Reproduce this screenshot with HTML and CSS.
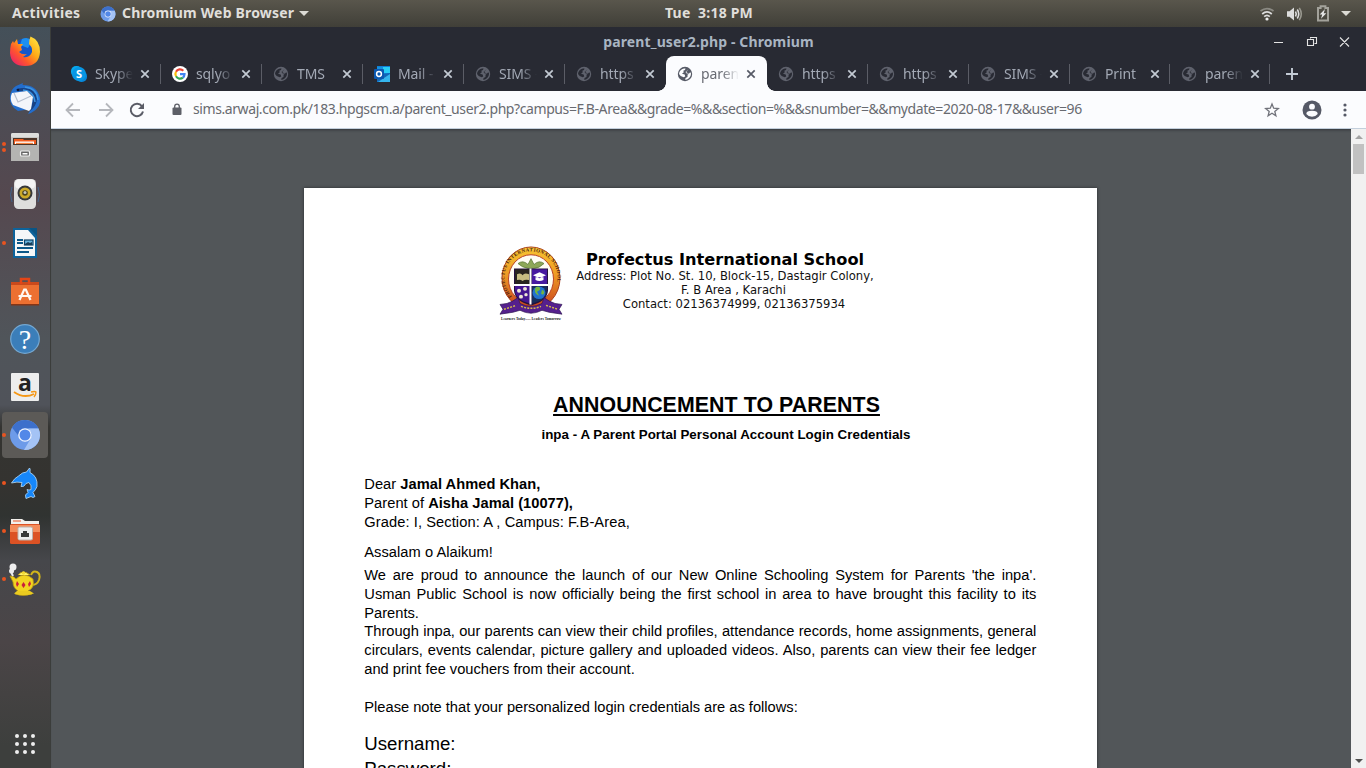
FILE: index.html
```html
<!DOCTYPE html>
<html lang="en">
<head>
<meta charset="utf-8">
<title>parent_user2.php - Chromium</title>
<link rel="stylesheet" href="styles.css">
</head>
<body>
<svg width="0" height="0" class="defs">
  <defs>
    <symbol id="globe" viewBox="0 0 16 16"><circle cx="8" cy="8" r="7.200" fill="currentColor"/><path class="land" d="M2 8Q2.300 3.600 7 2.400l1.500.100L8 4 6.300 4.700 6.800 6.300 5 7.700l2.700.700.500 2-1.500.900Q3 10.300 2 8zM11.500 3.300L9.200 6l1.800 1.300 3-.800Q14.300 11 10.500 13.200L8.300 14l.2-1.900 2-1.200.1-2.300 2.200-1.100L9.700 7.500 8.500 6z"/></symbol>
    <symbol id="close" viewBox="0 0 10 10"><path d="M1.300 1.300l7.400 7.400M8.700 1.300L1.300 8.700" stroke="currentColor" stroke-width="1.700" fill="none"/></symbol>
    <symbol id="chromium" viewBox="0 0 32 32"><circle cx="16" cy="16" r="15" fill="#6d9be9"/><path d="M3 8.500A15 15 0 0 1 29.500 9.500H16a6.500 6.500 0 0 0-6 8z" fill="#3d70cb"/><path d="M29.500 9.500A15 15 0 0 1 15 31l7-12c1.500-3 .500-7-3-9.500z" fill="#a4c3f5"/><circle cx="16" cy="16" r="6.800" fill="#f0f5ff"/><circle cx="16" cy="16" r="5.500" fill="#5288e8"/></symbol>
  </defs>
</svg>

<header class="topbar">
  <span class="activities">Activities</span>
  <svg class="app-icon" width="16" height="16"><use href="#chromium"/></svg>
  <span class="app-name">Chromium Web Browser</span>
  <i class="caret app-caret"></i>
  <span class="clock">Tue&nbsp; 3:18 PM</span>
  <div class="tray">
    <svg width="16" height="16" viewBox="0 0 16 16" fill="none" stroke="#ddd" stroke-width="1.700"><path d="M1.500 5Q8 .200 14.500 5" stroke="#8b8a83"/><path d="M3.200 8Q8 3.600 12.800 8M5.200 10.700Q8 8 10.800 10.700"/><circle cx="8" cy="13" r="1.600" fill="#eee" stroke="none"/></svg>
    <svg class="volume" width="17" height="16" viewBox="0 0 17 16" fill="none" stroke="#ddd" stroke-width="1.600"><path d="M1 5.300h2.500L8 1.500v13L3.500 10.700H1z" fill="#ddd" stroke="none"/><path d="M9.500 5.500q1.500 2.500 0 5M11.300 3.500q2.900 4.500 0 9"/><path d="M13.300 1.900q4 6.100 0 12.200" stroke="#99988f"/></svg>
    <svg width="14" height="17" viewBox="0 0 14 17"><path d="M2 3h2.600V1.200h4.800V3H12v12.500H2z" fill="none" stroke="#a3a29b" stroke-width="2"/><path d="M9 4L3.700 9.500h2.500L5 13.700l5.300-5.500H7.700z" fill="#e6e6e6"/></svg>
    <i class="caret"></i>
  </div>
</header>

<div class="desktop">
<nav class="dock">
  <div class="launcher"><svg width="32" height="32" viewBox="0 0 32 32"><defs><linearGradient id="ff" x1="1" y1="0" x2="0" y2="1"><stop offset="0" stop-color="#fff04a"/><stop offset=".4" stop-color="#ffaa16"/><stop offset=".65" stop-color="#ff572c"/><stop offset="1" stop-color="#e5107c"/></linearGradient></defs><circle cx="16" cy="16" r="12.500" fill="#1457c9"/><path d="M13 4q6-3 10 2l-4 7-8-3z" fill="#1d8ff0"/><path d="M2 9l2-3 1 2 3-4 1 5 5 0-2 3 1 3-3 2q3 3 8 2l-4 3q5 1 8-3 3-5-2-10 0-4 1.500-7.500Q31 5 31 17q-1 14-15 14T1 18q0-5 1-9z" fill="url(#ff)"/></svg></div>
  <div class="launcher"><svg width="32" height="32" viewBox="0 0 32 32"><path d="M7 3l7-3q-1 2 0 2 14 0 17 13 2 9-9 15l-3 1 3-5-13 2Q0 23 1 13 2 6 7 3z" fill="#236dcc"/><path d="M14 5q13 0 14 11-1 8-7 12l3-10-8-9-9-2q1-2 7-2z" fill="#174184"/><path d="M16 4q12 1 13 13M14 7q11 1 12 12" fill="none" stroke="#3c94e1" stroke-width="1.400"/><path d="M3 10l15-2 6 6-2 12-2 2L4 22q-4-6-1-12z" fill="#f3f5fa"/><path d="M5 10l4 9 13-6" fill="none" stroke="#b6bfce" stroke-width="1.200"/><circle cx="9" cy="7" r="1.300" fill="#111b3a"/></svg></div>
  <div class="launcher two"><svg width="30" height="30" viewBox="0 0 30 30"><rect x="1" y="1" width="28" height="28" rx="2" fill="#c8c8c6"/><rect x="1" y="1" width="28" height="4" rx="1.500" fill="#dededc"/><rect x="3" y="6" width="24" height="7" fill="#4c3427"/><path d="M4 12V7h9l1 1h12v4z" fill="#ef5b1f"/><path d="M5 12V9.500h19V12z" fill="#fff"/><path d="M6 12v-1.200h17V12z" fill="#f4823e"/><path d="M1 13h28v16H1z" fill="#b4b4b2"/><rect x="10.500" y="19" width="9" height="5" rx="1" fill="#666" stroke="#eee" stroke-width="1.200"/><rect x="12.500" y="21" width="5" height="1.500" fill="#fff"/></svg></div>
  <div class="launcher speaker"><svg width="32" height="32" viewBox="0 0 32 32"><path d="M3 9q-3 8 0 15M29 9q3 8 0 15" stroke="#40648d" fill="none"/><rect x="5" y="1" width="22" height="30" rx="4.500" fill="#dededd"/><rect x="6" y="1.500" width="20" height="9" rx="4" fill="#f4f4f4"/><circle cx="16" cy="15" r="7.500" fill="#36383a"/><circle cx="16" cy="15" r="5.500" fill="#cba928"/><circle cx="16" cy="15" r="2.800" fill="#4b4320"/><circle cx="16" cy="14.500" r="1.500" fill="#c5c7b6"/></svg></div>
  <div class="launcher one"><svg width="26" height="32" viewBox="0 0 26 32"><path d="M1 1h17l7 8v22H1z" fill="#0d639b"/><path d="M3 3h13l7 8v18H3z" fill="#f5f7f8"/><path d="M17 1h8v8z" fill="#0a5585"/><path d="M5 13h6M5 16h6M5 21h16M5 25h12" stroke="#0b5889" stroke-width="1.800"/><rect x="12.500" y="13" width="8.500" height="5" fill="#67b2db" stroke="#0b4167" stroke-width="1.200"/><path d="M13 17l3-2 2 1 2-1v3h-7z" fill="#183c57"/></svg></div>
  <div class="launcher"><svg width="30" height="32" viewBox="0 0 30 32"><path d="M1 7h28v23H1z" fill="#ec7031"/><path d="M1 7h28v3H1z" fill="#c94a1c"/><path d="M1 29h28v1.500H1z" fill="#843516"/><path d="M11 9V4h8v5" fill="none" stroke="#e34517" stroke-width="2.500"/><path d="M9.500 25l4.700-10.500h1.600L20.500 25M8.500 21h13" stroke="#fff7f1" stroke-width="2.200" fill="none"/></svg></div>
  <div class="launcher"><svg width="32" height="32" viewBox="0 0 32 32"><circle cx="16" cy="16" r="14.300" fill="#3b7eb9" stroke="#74a8d2" stroke-width="1.200"/><text x="16" y="26" class="help">?</text></svg></div>
  <div class="launcher"><svg width="28" height="28" viewBox="0 0 28 28"><rect width="28" height="28" rx="1" fill="#ededed"/><text x="14" y="17.500" class="amazon">a</text><path d="M3 19q10 7 20 2" fill="none" stroke="#f59715" stroke-width="1.900"/><path d="M20 19q4-1 5 0 0 3-2 5" fill="none" stroke="#f59715" stroke-width="1.400"/></svg></div>
  <div class="launcher one current"><svg width="32" height="32"><use href="#chromium"/></svg></div>
  <div class="launcher one"><svg width="32" height="32" viewBox="0 0 32 32"><path d="M2.500 16q3-5 7-7 4-4 8-4l3-4q1 0 .500 4.500 8 4 7 14-1 3-4 6l2 4q-2 2-4 0l-5 2q-2-4 2-6l-1-3q2 1 4 0 1-4-2-7l-3 1q-2 4-5 3l1-4q-5-1-10.500.500z" fill="#1687fa" stroke="#b9dcf6" stroke-width=".8"/></svg></div>
  <div class="launcher one"><svg width="32" height="28" viewBox="0 0 32 28"><path d="M2 8V2h11l3 2h14v5z" fill="#f2f0ec"/><path d="M4 4h8" stroke="#e55529"/><rect x="1" y="7" width="30" height="20" rx="1.500" fill="#dc5224"/><path d="M1 8h30v7H1z" fill="#f48b59"/><rect x="9" y="10" width="14.500" height="13" rx="1.500" fill="#eeeeed" stroke="#bcb2ac"/><path d="M12 20v-4h2v-2h4v2h2v4z" fill="#393a38"/></svg></div>
  <div class="launcher one"><svg width="34" height="34" viewBox="0 0 34 34"><path d="M23 13q2-5 6-3 4 2 2 8-2 5-7 5" fill="none" stroke="#d2b51a" stroke-width="2"/><path d="M2 14q4 0 6 3 8-8 17 0 2 9-5 12l4 3q-9 3-17 0l3-3q-5-3-5-9z" fill="#f2d321" stroke="#b69612" stroke-width=".8"/><path d="M9 29h13l4 2.500q-10 3-20 0z" fill="#eacb20"/><path d="M10 13q5-6 12 0" fill="#fff26b" stroke="#bd9a17"/><circle cx="15.500" cy="11" r="1.700" fill="#f3da35"/><path d="M9 19l2 3-2 3-1-3zM15.500 20l2 3-2 3-2-3zM22 19l1 3-2 3-1-3z" fill="#ca1d3b"/><circle cx="5" cy="5" r="3.500" fill="#eee"/><circle cx="3.500" cy="9" r="2.500" fill="#eee"/><path d="M3 10q1 2 2 4" stroke="#eee" stroke-width="2"/></svg></div>
  <div class="apps"><i></i><i></i><i></i><i></i><i></i><i></i><i></i><i></i><i></i></div>
</nav>

<main class="window">
  <div class="titlebar"><span class="window-title">parent_user2.php - Chromium</span>
    <svg class="window-buttons" width="80" height="14" viewBox="0 0 80 14" fill="none" stroke="#e4e4e4" stroke-width="1.100"><path d="M1 7.500h9M37.500 3.500v-1h6v6h-2M34.500 4.500h6v6h-6zM67 2.500l9 9M76 2.500l-9 9"/></svg>
  </div>
  <div class="tabs">
    <div class="tab"><svg class="fav" viewBox="0 0 16 16"><rect width="11" height="11" rx="5" fill="#06a9ef"/><rect x="5" y="5" width="11" height="11" rx="5" fill="#0786d9"/><circle cx="8" cy="8" r="7" fill="#0796e4"/><text x="8" y="12" class="skype-s">S</text></svg><span class="label">Skype</span><svg class="x"><use href="#close"/></svg></div>
    <div class="tab"><svg class="fav" viewBox="0 0 16 16"><circle cx="8" cy="8" r="8" fill="#fff"/><g fill="none" stroke-width="2.200"><path d="M11.300 4.700A4.600 4.600 0 0 0 4 5.800" stroke="#ea4335"/><path d="M4 5.800a4.600 4.600 0 0 0 0 4.500" stroke="#fbbc05"/><path d="M4 10.300a4.600 4.600 0 0 0 6.900 1.300" stroke="#34a853"/><path d="M10.900 11.600q1.500-1.200 1.600-3.400H8" stroke="#4285f4"/></g></svg><span class="label">sqlyo</span><svg class="x"><use href="#close"/></svg></div>
    <div class="tab"><svg class="fav"><use href="#globe"/></svg><span class="label short">TMS</span><svg class="x"><use href="#close"/></svg></div>
    <div class="tab"><svg class="fav" viewBox="0 0 16 16"><path d="M3 0h13v16H3z" fill="#0f7fd6"/><path d="M3 1h6v5H3z" fill="#1490df"/><path d="M9 1h7v6H9z" fill="#28cdf5"/><path d="M3 9l13-2v8.500H3z" fill="#1266b7"/><path d="M16 8v8H4z" fill="#35b5ed"/><rect y="3" width="10" height="10" rx="1" fill="#0b58b0"/><circle cx="5" cy="8" r="2.400" stroke="#fff" stroke-width="1.500" fill="none"/></svg><span class="label">Mail -</span><svg class="x"><use href="#close"/></svg></div>
    <div class="tab"><svg class="fav"><use href="#globe"/></svg><span class="label">SIMS -</span><svg class="x"><use href="#close"/></svg></div>
    <div class="tab before"><svg class="fav"><use href="#globe"/></svg><span class="label">https</span><svg class="x"><use href="#close"/></svg></div>
    <div class="tab active"><svg class="fav"><use href="#globe"/></svg><span class="label">paren</span><svg class="x"><use href="#close"/></svg></div>
    <div class="tab"><svg class="fav"><use href="#globe"/></svg><span class="label">https</span><svg class="x"><use href="#close"/></svg></div>
    <div class="tab"><svg class="fav"><use href="#globe"/></svg><span class="label">https</span><svg class="x"><use href="#close"/></svg></div>
    <div class="tab"><svg class="fav"><use href="#globe"/></svg><span class="label">SIMS -</span><svg class="x"><use href="#close"/></svg></div>
    <div class="tab narrow"><svg class="fav"><use href="#globe"/></svg><span class="label short">Print</span><svg class="x"><use href="#close"/></svg></div>
    <div class="tab narrow"><svg class="fav"><use href="#globe"/></svg><span class="label">paren</span><svg class="x"><use href="#close"/></svg></div>
    <svg class="plus" width="12" height="12" viewBox="0 0 12 12"><path d="M6 0v12M0 6h12" stroke="#c3cbd5" stroke-width="1.900"/></svg>
  </div>
  <div class="toolbar">
    <svg class="back" width="16" height="16" viewBox="0 0 16 16" fill="none" stroke="#b5b7bc" stroke-width="1.800"><path d="M15 8H2M8 1.500L1.500 8 8 14.500"/></svg>
    <svg class="forward" width="16" height="16" viewBox="0 0 16 16" fill="none" stroke="#b5b7bc" stroke-width="1.800"><path d="M1 8h13M8 1.500L14.500 8 8 14.500"/></svg>
    <svg class="reload" width="16" height="16" viewBox="0 0 16 16"><path d="M13 4.300A6.200 6.200 0 1 0 14 9.500" fill="none" stroke="#5a5c66" stroke-width="2"/><path d="M15 1v6H9z" fill="#5a5c66"/></svg>
    <svg class="lock" width="10" height="13" viewBox="0 0 10 13"><rect x=".5" y="4.500" width="9" height="7.500" rx="1" fill="#5d5f67"/><path d="M2.700 5V3.400a2.300 2.300 0 0 1 4.600 0V5" fill="none" stroke="#5d5f67" stroke-width="1.300"/></svg>
    <span class="url">sims.arwaj.com.pk/183.hpgscm.a/parent_user2.php?campus=F.B-Area&amp;&amp;grade=%&amp;&amp;section=%&amp;&amp;snumber=&amp;&amp;mydate=2020-08-17&amp;&amp;user=96</span>
    <svg class="star" width="16" height="16" viewBox="0 0 16 16"><path d="M8 2l1.700 4.200 4.600.300-3.500 2.900 1.100 4.400L8 11.300l-3.900 2.500 1.100-4.400-3.500-2.900 4.600-.300z" fill="none" stroke="#70727a" stroke-width="1.300"/></svg>
    <svg class="profile" width="20" height="20" viewBox="0 0 20 20"><circle cx="10" cy="10" r="9.500" fill="#555966"/><circle cx="10" cy="6.700" r="2.900" fill="#fbfcfe"/><path d="M4.300 14q0-3.200 5.700-3.200t5.700 3.200Q13.500 16.800 10 16.800T4.300 14z" fill="#fbfcfe"/></svg>
    <svg class="menu" width="4" height="14" viewBox="0 0 4 14" fill="#555966"><circle cx="2" cy="2" r="1.600"/><circle cx="2" cy="7" r="1.600"/><circle cx="2" cy="12" r="1.600"/></svg>
  </div>
  <div class="viewport">
    <article class="sheet">
      <div class="letterhead">
        <svg class="crest" width="64" height="75" viewBox="0 0 64 77" preserveAspectRatio="none">
          <defs><linearGradient id="ring" x1="0" y1="0" x2="0" y2="1"><stop offset="0" stop-color="#f7c531"/><stop offset=".45" stop-color="#ee9a25"/><stop offset="1" stop-color="#c73d1c"/></linearGradient><path id="arc" d="M13 52C-4 32 10 5.500 32 5.500S68 32 51 52"/></defs>
          <ellipse cx="32" cy="33" rx="29" ry="32" fill="url(#ring)" stroke="#a8401c"/><ellipse cx="32" cy="34" rx="22.500" ry="25" fill="#fffdf4" stroke="#b73e24"/>
          <text class="ring-text"><textPath href="#arc">PROFECTUS INTERNATIONAL SCHOOL</textPath></text>
          <path d="M19 18q5-4 10 1l3-6 3 6q5-5 10-1-5 5-10 5h-6q-6-1-10-5z" fill="#8da758" stroke="#567231" stroke-width=".7"/>
          <path d="M15 23h34v23q-1 11-17 15Q16 57 15 46z" fill="#25113f"/><path d="M16 24h15v15H16z" fill="#29251e"/><path d="M33 24h15v15H33z" fill="#4719a0"/><path d="M16 41h15v18q-14-3-15-13z" fill="#451690"/><path d="M33 41h15v6q-1 9-15 12z" fill="#172d5b"/>
          <path d="M31.500 23v37M15 40h34" stroke="#fff" stroke-width="2"/><path d="M18 29q4-2 5.500 1 2-3 6.500-1v6q-4-1-6.500 1-2-2-5.500-1z" fill="#c7bd80"/><path d="M34 30l6.500-3 6.500 3-6.500 3zM36.500 32v3q4 2 8 0v-3" fill="#fff"/><g fill="#efe8d4"><circle cx="20" cy="46" r="2"/><circle cx="26" cy="44" r="2"/><circle cx="22" cy="52" r="2"/><circle cx="27" cy="50" r="1.700"/></g><circle cx="40" cy="48" r="6.500" fill="#2271cf"/><path d="M37 42q5-1 4 3l-3 2 2 4q-5-2-4-7zM43 45q4 2 1 5l-2-1z" fill="#73b540"/>
          <path d="M1 60l7-1q6-2 11-6l2 6q11 6 22 0l2-6q5 4 11 6l7 1-3 5 3 5-13-2-7-2q-11 6-22 0l-7 2-13 2 3-5z" fill="#55208d" stroke="#2d1351" stroke-width=".7"/><path d="M5 65l12-4M22 62q10 4 20 0M47 61l12 4" stroke="#d4b84e" stroke-width="1.500" stroke-dasharray="2 1.200" fill="none"/>
          <text x="32" y="75.500" class="motto">Learners Today...... Leaders Tomorrow</text>
        </svg>
        <div class="school"><h1>Profectus International School</h1><p>Address: Plot No. St. 10, Block-15, Dastagir Colony,</p><p class="area">F. B Area , Karachi</p><p class="contact">Contact: 02136374999, 02136375934</p></div>
      </div>
      <h2>ANNOUNCEMENT TO PARENTS</h2>
      <h3>inpa - A Parent Portal Personal Account Login Credentials</h3>
      <div class="recipient"><p>Dear <b>Jamal Ahmed Khan,</b></p><p>Parent of <b>Aisha Jamal (10077),</b></p><p class="grade">Grade: I, Section: A , Campus: F.B-Area,</p></div>
      <p class="greeting">Assalam o Alaikum!</p>
      <div class="letter">
        <p class="full">We are proud to announce the launch of our New Online Schooling System for Parents 'the inpa'.</p>
        <p class="full">Usman Public School is now officially being the first school in area to have brought this facility to its</p>
        <p>Parents.</p>
        <p class="full">Through inpa, our parents can view their child profiles, attendance records, home assignments, general</p>
        <p class="full">circulars, events calendar, picture gallery and uploaded videos. Also, parents can view their fee ledger</p>
        <p>and print fee vouchers from their account.</p>
        <p class="note">Please note that your personalized login credentials are as follows:</p>
      </div>
      <div class="credentials"><p>Username:</p><p>Password:</p></div>
    </article>
    <div class="scrollbar"><i class="up"></i><i class="thumb"></i><i class="down"></i></div>
  </div>
</main>
</div>
</body>
</html>
```
FILE: styles.css
```css
* { box-sizing: border-box; }
body, p, h1, h2, h3 { margin: 0; }
body { width: 1366px; height: 768px; overflow: hidden; font-family: "Noto Sans", "Open Sans", sans-serif; }
svg { display: block; flex: none; overflow: visible; }
.defs { position: absolute; }

.topbar { height: 27px; display: flex; align-items: center; position: relative; padding-left: 12px; background: linear-gradient(#59564c, #403f38); color: #e0dfdb; font-size: 14px; line-height: 19px; font-weight: 700; white-space: nowrap; }
.topbar span { padding-bottom: 2px; }
.activities { width: 88px; letter-spacing: .35px; }
.app-icon { margin-right: 6px; }
.app-name { width: 173px; letter-spacing: .18px; }
.clock { width: 100px; margin-left: 356px; letter-spacing: .2px; }
.caret { width: 0; height: 0; border: 5px solid transparent; border-top-color: #dcdbd5; border-bottom: 0; }
.app-caret { margin-left: 4px; }
.tray { margin-left: auto; padding-right: 15px; display: flex; align-items: center; gap: 11px; }
.volume { margin-right: 2px; }

.desktop { display: flex; height: 741px; }
.dock { width: 51px; flex: none; border-right: 1px solid #3b3d3b; background: linear-gradient(#445059, #55484f 23%, #50555a 42%, #50535a 51%, #343431 54%, #343330 62%, #303331 66%, #46474b 72%, #4b4547 83%, #3d3f3d 97%); }
.launcher { height: 48px; padding-right: 1px; display: flex; justify-content: center; align-items: center; position: relative; }
.speaker { padding-bottom: 2px; }
.launcher.current { margin: 1px 2px; height: 46px; border-radius: 4px; background: #5c5a57; }
.one::before, .two::before, .two::after { content: ""; position: absolute; left: 2px; top: 22px; width: 4px; height: 4px; border-radius: 50%; background: #e95420; }
.current::before { left: 0; top: 21px; }
.two::before { top: 19px; }
.two::after { top: 25px; }
.help { font: 28px "Liberation Serif", serif; fill: #fff; text-anchor: middle; }
.amazon { font: bold 23px "Open Sans", sans-serif; fill: #222; text-anchor: middle; }
.apps { margin: 131px 0 0 15px; display: grid; grid-template-columns: repeat(3, 4px); gap: 4px; }
.apps i { width: 4px; height: 4px; border-radius: 50%; background: #eee; }

.window { flex: 1; min-width: 0; background: #282a33; }
.titlebar { height: 30px; position: relative; display: flex; justify-content: center; align-items: center; color: #a9b5c2; font-size: 14px; line-height: 19px; font-weight: 700; white-space: nowrap; }
.window-title { padding-bottom: 2px; letter-spacing: .12px; }
.window-buttons { position: absolute; right: 13px; top: 8px; }
.tabs { height: 34px; padding-left: 9px; display: flex; align-items: center; }
.tab { --land: #282a33; width: 101px; height: 34px; flex: none; display: flex; align-items: center; padding-left: 11px; position: relative; color: #a3a9b5; }
.tab.narrow { width: 100px; }
.tab::after { content: ""; position: absolute; right: 0; top: 7px; width: 1px; height: 20px; background: #5b5d66; }
.tab.active::after, .tab.before::after { display: none; }
.fav { width: 16px; height: 16px; color: #5f626d; }
.land { fill: var(--land); }
.label { width: 38px; margin-left: 8px; white-space: pre; font-size: 14px; line-height: 20px; letter-spacing: -.1px; mask-image: linear-gradient(90deg, #000 55%, transparent 100%); }
.short { mask-image: linear-gradient(90deg, #000 75%, transparent 110%); }
.x { width: 10px; height: 10px; margin-left: 7px; color: #c3cad3; }
.tab.active { --land: #fbfcfe; background: #fbfcfe; border-radius: 8px 8px 0 0; color: #686b73; margin-top: -1px; height: 35px; }
.active::before { content: ""; position: absolute; left: -8px; right: -8px; bottom: 0; height: 8px; background: radial-gradient(circle at 0 0, transparent 7.500px, #fbfcfe 8px) 0 0/8px 8px no-repeat, radial-gradient(circle at 100% 0, transparent 7.500px, #fbfcfe 8px) 100% 0/8px 8px no-repeat; }
.active .fav, .active .x { color: #565a66; }
.skype-s { font: bold 11px "Noto Sans", sans-serif; fill: #fff; text-anchor: middle; }
.plus { margin-left: 16px; }
.toolbar { height: 38px; background: #fbfcfe; border-bottom: 1px solid #c3cfdc; padding: 0 19px 0 14px; display: flex; align-items: center; }
.forward { margin-left: 17px; }
.reload { margin-left: 15px; }
.lock { margin-left: 27px; }
.url { margin-left: 11px; padding-bottom: 2px; width: 1055px; font-size: 14px; letter-spacing: -.413px; white-space: nowrap; color: #686a70; }
.star { margin-left: 16px; }
.profile { margin: 0 21px 0 22px; }

.viewport { height: 639px; overflow: hidden; display: flex; background: #525659; box-shadow: inset 0 3px 3px -2px #30353a; }
.sheet { width: 793px; height: 1122px; flex: none; margin: 59px auto 0 253px; padding: 58px 60px; background: #fff; color: #000; box-shadow: 0 0 3px #292b2d; font: 14.667px/19px "Liberation Sans", Arial, sans-serif; }
.letterhead { display: flex; align-items: flex-start; padding-left: 135px; height: 146px; }
.ring-text { font: bold 5px "Liberation Serif", serif; letter-spacing: .45px; fill: #4a1c10; }
.motto { font: bold 3.600px "Liberation Serif", serif; text-anchor: middle; fill: #222; }
.school { width: 300px; margin-left: 12px; padding-top: 4px; text-align: center; white-space: nowrap; font: 11.6px/14px "DejaVu Sans", sans-serif; color: #111; }
.school h1 { font-size: 16.180px; line-height: 19px; color: #000; }
.school .area { padding-left: 17px; }
.school .contact { padding-left: 18px; }
h2 { font-size: 21.333px; line-height: 26px; letter-spacing: .08px; width: 705px; text-align: center; text-decoration: underline; text-decoration-thickness: 2px; text-underline-offset: 2px; }
h3 { margin-top: 8px; width: 724px; text-align: center; font-size: 13.333px; line-height: 18px; letter-spacing: .03px; }
.recipient { margin-top: 31px; padding-left: .3px; letter-spacing: .03px; }
.grade { letter-spacing: .08px; }
.greeting { margin-top: 11px; padding-left: .3px; letter-spacing: .04px; }
.letter { margin-top: 4px; width: 672.3px; padding-left: .3px; line-height: 18.750px; white-space: nowrap; }
.full { text-align: justify; text-align-last: justify; }
.note { margin-top: 19px; }
.credentials { margin-top: 15px; padding-left: .3px; font-size: 18.667px; line-height: 25px; }
.scrollbar { width: 15px; flex: none; background: #f1f1f1; display: flex; flex-direction: column; align-items: center; }
.up { margin-top: 6px; border: 4px solid transparent; border-top: 0; border-bottom-color: #a3a3a3; }
.thumb { margin-top: 5px; width: 11px; height: 30px; background: #c1c1c1; }
.down { margin: auto 0 5px; border: 4px solid transparent; border-bottom: 0; border-top-color: #505050; }
```
